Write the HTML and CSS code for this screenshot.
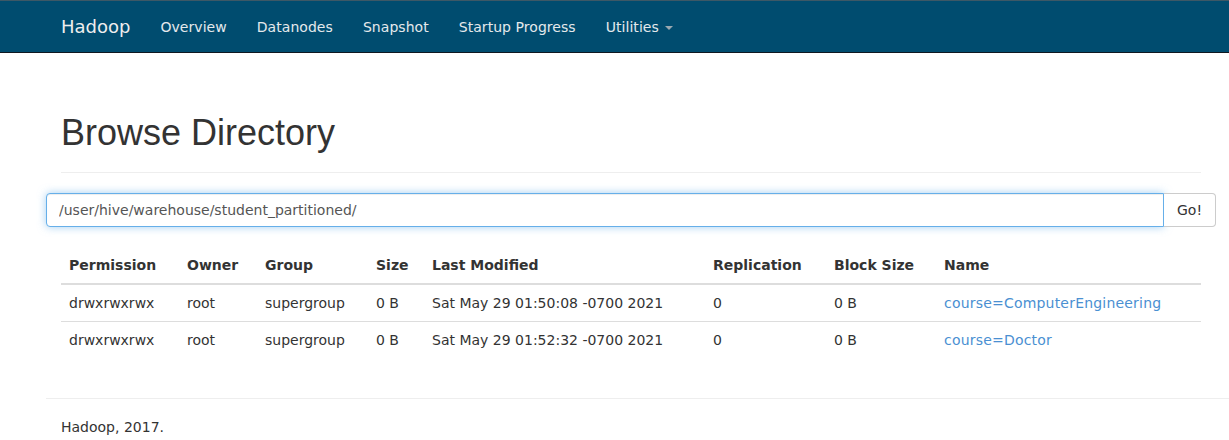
FILE: index.html
```html
<!DOCTYPE html>
<html lang="en">
<head>
    <meta charset="UTF-8">
    <meta name="viewport" content="width=device-width, initial-scale=1.0">
    <title>Browsing HDFS</title>
    <link rel="stylesheet" href="styles.css">
</head>
<body>
    <header class="navbar">
        <div class="navbar-inner">
            <a class="brand" href="#">Hadoop</a>
            <ul class="nav">
                <li><a href="#">Overview</a></li>
                <li><a href="#">Datanodes</a></li>
                <li><a href="#">Snapshot</a></li>
                <li><a href="#">Startup Progress</a></li>
                <li><a href="#">Utilities <span class="caret"></span></a></li>
            </ul>
        </div>
    </header>

    <main class="container">
        <div class="page-header">
            <h1>Browse Directory</h1>
        </div>

        <form class="input-group" onsubmit="return false">
            <input class="path-input" type="text" value="/user/hive/warehouse/student_partitioned/" autofocus>
            <button class="go-btn" type="submit">Go!</button>
        </form>

        <div class="table-wrap">
            <table class="listing">
                <colgroup>
                    <col style="width:118px">
                    <col style="width:78px">
                    <col style="width:111px">
                    <col style="width:56px">
                    <col style="width:281px">
                    <col style="width:121px">
                    <col style="width:110px">
                    <col>
                </colgroup>
                <thead>
                    <tr>
                        <th>Permission</th>
                        <th>Owner</th>
                        <th>Group</th>
                        <th>Size</th>
                        <th>Last Modified</th>
                        <th>Replication</th>
                        <th>Block Size</th>
                        <th>Name</th>
                    </tr>
                </thead>
                <tbody>
                    <tr>
                        <td>drwxrwxrwx</td>
                        <td>root</td>
                        <td>supergroup</td>
                        <td>0 B</td>
                        <td>Sat May 29 01:50:08 -0700 2021</td>
                        <td>0</td>
                        <td>0 B</td>
                        <td><a href="#">course=ComputerEngineering</a></td>
                    </tr>
                    <tr>
                        <td>drwxrwxrwx</td>
                        <td>root</td>
                        <td>supergroup</td>
                        <td>0 B</td>
                        <td>Sat May 29 01:52:32 -0700 2021</td>
                        <td>0</td>
                        <td>0 B</td>
                        <td><a href="#">course=Doctor</a></td>
                    </tr>
                </tbody>
            </table>
        </div>

        <hr class="footer-rule">
        <footer class="footer">
            <p>Hadoop, 2017.</p>
        </footer>
    </main>
</body>
</html>
```

FILE: styles.css
```css
* {
    margin: 0;
    padding: 0;
    box-sizing: border-box;
}

body {
    font-family: 'DejaVu Sans', sans-serif;
    font-size: 14px;
    line-height: 20px;
    color: #333333;
    background-color: #ffffff;
    overflow: hidden;
}

a {
    text-decoration: none;
}

/* top bar */
.navbar {
    background-color: #004c6f;
    border-top: 1px solid #3d5866;
    border-bottom: 1px solid #101820;
    height: 53px;
}

.navbar-inner {
    display: flex;
    align-items: center;
    padding-left: 46px;
    height: 51px;
}

.brand {
    font-size: 18px;
    line-height: 20px;
    padding: 15px;
    color: #eeeeee;
}

.nav {
    display: flex;
    list-style: none;
}

.nav a {
    display: block;
    padding: 15px;
    color: #e4e9ec;
    letter-spacing: 0.05px;
}

.caret {
    display: inline-block;
    width: 0;
    height: 0;
    margin-left: 2px;
    vertical-align: middle;
    border-top: 4px solid #9aa8b0;
    border-left: 4px solid transparent;
    border-right: 4px solid transparent;
}

/* content */
.container {
    width: 1170px;
    margin-left: 46px;
}

.page-header {
    margin: 60px 15px 20px;
    padding-bottom: 9px;
    border-bottom: 1px solid #eeeeee;
}

.page-header h1 {
    font-family: 'Liberation Sans', Arial, sans-serif;
    font-size: 36px;
    font-weight: 500;
    line-height: 1.1;
    margin-bottom: 10px;
}

.input-group {
    display: flex;
    height: 34px;
}

.path-input {
    flex: 1;
    font-family: 'DejaVu Sans', sans-serif;
    font-size: 14px;
    color: #555555;
    padding: 6px 12px;
    border: 1px solid #66afe9;
    border-radius: 4px 0 0 4px;
    outline: 0;
    box-shadow: inset 0 1px 1px rgba(0, 0, 0, .075), 0 0 8px rgba(102, 175, 233, .6);
}

.go-btn {
    width: 52px;
    font-family: 'DejaVu Sans', sans-serif;
    font-size: 14px;
    color: #333333;
    background-color: #ffffff;
    border: 1px solid #cccccc;
    border-left: 0;
    border-radius: 0 4px 4px 0;
}

.table-wrap {
    padding: 0 15px;
    margin-top: 20px;
}

.listing {
    width: 100%;
    border-collapse: collapse;
    table-layout: fixed;
    margin-bottom: 20px;
}

.listing th,
.listing td {
    text-align: left;
    padding: 8px;
    line-height: 20px;
    white-space: nowrap;
}

.listing th {
    font-weight: bold;
    border-bottom: 2px solid #dddddd;
}

.listing tbody tr + tr td {
    border-top: 1px solid #dddddd;
}

.listing a {
    color: #4a90d2;
    letter-spacing: 0.2px;
}

.footer-rule {
    border: 0;
    border-top: 1px solid #eeeeee;
    margin: 40px 0 18px;
    width: 1183px;
}

.footer {
    padding: 0 15px;
}
```
